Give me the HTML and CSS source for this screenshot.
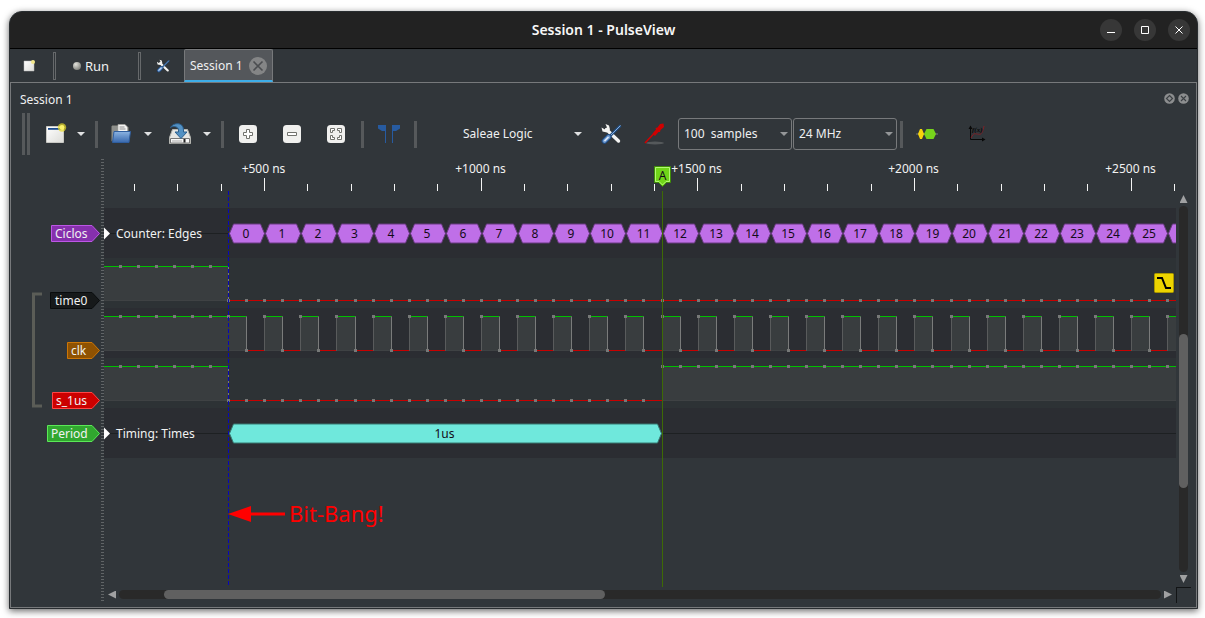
FILE: index.html
```html
<!DOCTYPE html>
<html lang="en">
<head>
<meta charset="utf-8">
<title>Session 1 - PulseView</title>
<link rel="stylesheet" href="styles.css">
</head>
<body>
<svg class="defs" aria-hidden="true">
  <defs>
    <linearGradient id="paper" x1="0" y1="0" x2="1" y2="1"><stop offset="0" stop-color="#fff"/><stop offset="1" stop-color="#dcdcd8"/></linearGradient>
    <linearGradient id="folder" x1="0" y1="0" x2="0" y2="1"><stop offset="0" stop-color="#8cb4e2"/><stop offset="1" stop-color="#3868ad"/></linearGradient>
    <radialGradient id="ball" cx=".35" cy=".3" r=".8"><stop offset="0" stop-color="#e2e2dc"/><stop offset="1" stop-color="#777872"/></radialGradient>
    <symbol id="tools" viewBox="0 0 22 22">
      <path d="M6.500 6.500 18.500 18" stroke="#f4f4f2" stroke-width="3.400" stroke-linecap="round"/>
      <path d="M1.500 4.500 2.500 8.500 7 9.500 10 6.500 9 2.500 5.500 1 7 4.500 5 6.500z" fill="#f4f4f2"/>
      <path d="M20.500 2.500 10 13" stroke="#214f83" stroke-width="2.600"/>
      <path d="M20.500 2.500 10 13" stroke="#89addb" stroke-width="1"/>
      <path d="M8.500 14 4.500 18" stroke="#1f4c84" stroke-width="5.800" stroke-linecap="round"/>
      <path d="M8.500 14 4.500 18" stroke="#709bd0" stroke-width="3.800" stroke-linecap="round"/>
      <path d="M8.500 14 4.500 18" stroke="#e3edf9" stroke-width="1.500"/>
    </symbol>
  </defs>
</svg>

<main class="window">
  <header class="titlebar">
    <h1>Session 1 - PulseView</h1>
    <div class="window-buttons">
      <button aria-label="Minimize"><svg width="22" height="22"><path d="M7 13.500h8"/></svg></button>
      <button aria-label="Maximize"><svg width="22" height="22"><path d="M7.500 7.500h7v7h-7z"/></svg></button>
      <button aria-label="Close"><svg width="22" height="22"><path d="m7.500 7.500 7 7m0-7-7 7"/></svg></button>
    </div>
  </header>

  <nav class="tabs-bar">
    <button class="small-tool" aria-label="New session"><svg width="14" height="14"><path d="M2 2h10v10H2z" fill="url(#paper)" stroke="#bbb" stroke-width=".5"/><circle cx="11" cy="3" r="2" fill="#f2e78a"/></svg></button>
    <span class="groove"></span>
    <button class="run"><svg width="10" height="10" aria-hidden="true"><circle cx="5" cy="5" r="4" fill="url(#ball)"/></svg>Run</button>
    <span class="groove"></span>
    <button class="small-tool settings" aria-label="Settings"><svg width="14" height="14"><use href="#tools"/></svg></button>
    <div class="tab"><button class="tab-name">Session 1</button><button class="tab-close" aria-label="Close Session 1"><svg width="18" height="18"><circle cx="9" cy="9" r="9" fill="#848586"/><path d="m4.500 4.500 9 9m0-9-9 9" stroke="#4b4d50" stroke-width="1.600"/></svg></button></div>
  </nav>

  <section class="panel">
    <div class="panel-head">
      <h2>Session 1</h2>
      <div class="panel-buttons">
        <button aria-label="Float"><svg width="11" height="11"><circle cx="5.500" cy="5.500" r="5.300" fill="#8c8e8f"/><path d="M5.500 2.500 8.500 5.500 5.500 8.500 2.500 5.500z" fill="none" stroke="#3c4044" stroke-width="1.200"/></svg></button>
        <button aria-label="Close dock"><svg width="11" height="11"><circle cx="5.500" cy="5.500" r="5.300" fill="#8c8e8f"/><path d="m3 3 5 5m0-5-5 5" stroke="#3c4044" stroke-width="1.100"/></svg></button>
      </div>
    </div>

    <div class="toolbar">
      <span class="handle"></span>
      <button class="tool after-handle" aria-label="New view"><svg width="22" height="22"><path d="M1.500 3.500h17v16h-17z" fill="url(#paper)" stroke="#c9c9c4"/><path d="M3 5h14v1.800H3z" fill="#1d4c8c"/><circle cx="17" cy="4.500" r="4.200" fill="#e8dc28" opacity=".7"/><circle cx="17" cy="4.500" r="2.400" fill="#fbf36a"/></svg></button>
      <button class="caret" aria-label="New view menu"></button>
      <span class="rule wide"></span>
      <button class="tool spaced" aria-label="Open"><svg width="22" height="22"><path d="M1.500 18V3.500l1-1h6l1 2h9V18z" fill="#8d8f8b" stroke="#60625e"/><path d="M8 9V1.500h7l2.500 2.500V9z" fill="#f4f4f2" stroke="#a5a5a0" stroke-width=".7"/><path d="M9.500 4h5m-5 2h6" stroke="#777" stroke-width=".8"/><path d="m4 8.500h16.500l-1.500 11H2.500z" fill="url(#folder)" stroke="#2f5e9f"/></svg></button>
      <button class="caret" aria-label="Open menu"></button>
      <button class="tool save" aria-label="Save"><svg width="24" height="24"><path d="M4.500 7.500h15l3 8v6h-21v-6z" fill="#e6e6e3" stroke="#b5b6b1"/><path d="M2.500 16.500h19v4.500h-19z" fill="#f8f8f7" stroke="#777"/><path d="M4 19h10" stroke="#aaa"/><path d="M16.500 17v3.500" stroke="#222" stroke-width="2"/><path d="M2.500 5.500C5 .500 15.500-.500 15.500 8v2h3.500l-6 6.500-6-6.500h3.500V8C10.500 4.500 5 3.500 2.500 5.500z" fill="#5391c3" stroke="#2c608e"/></svg></button>
      <button class="caret" aria-label="Save menu"></button>
      <span class="rule wide"></span>
      <button class="tool" aria-label="Zoom in"><svg width="20" height="20"><rect x="1" y="1" width="18" height="18" rx="3.500" fill="#f0f0ee"/><path d="M8.500 5.500h3v3h3v3h-3v3h-3v-3h-3v-3h3z" fill="#fff" stroke="#71726d"/></svg></button>
      <button class="tool" aria-label="Zoom out"><svg width="20" height="20"><rect x="1" y="1" width="18" height="18" rx="3.500" fill="#f0f0ee"/><path d="M5.500 8.500h9v3h-9z" fill="#fff" stroke="#71726d"/></svg></button>
      <button class="tool" aria-label="Zoom to fit"><svg width="20" height="20"><rect x="1" y="1" width="18" height="18" rx="3.500" fill="#f0f0ee"/><path d="M4.500 8.500v-4h4v2h-2v2zm7-4h4v4h-2v-2h-2zm-7 7v4h4v-2h-2v-2zm11 0v4h-4v-2h2v-2z" fill="#fff" stroke="#71726d"/></svg></button>
      <span class="rule"></span>
      <button class="tool flags" aria-label="Show cursors"><svg width="22" height="20"><path d="M0 1h8v18H7V7H4L0 4.500zM22 1h-8v18h1V7h3l4-2.500z" fill="#275ba0"/></svg></button>
      <span class="rule"></span>
      <button class="device"><span>Saleae Logic</span></button>
      <button class="tool" aria-label="Configure device"><svg width="22" height="22"><use href="#tools"/></svg></button>
      <button class="tool" aria-label="Configure channels"><svg width="22" height="22"><ellipse cx="11" cy="20" rx="9" ry="1.500" fill="#55595b"/><path d="M1 20 10 10.500" stroke="#d00000" stroke-width="1.600"/><path d="M8.500 10.500 12 6.500 11.500 5 13.500 4.500 16 1 19.500 .500 20 4 16.500 7 16 9 14.500 9 11 13z" fill="#d00000"/></svg></button>
      <span class="combo samples"><select aria-label="Number of samples"><option>100&nbsp; samples</option></select></span>
      <span class="combo rate"><select aria-label="Sample rate"><option>24 MHz</option></select></span>
      <span class="rule after-combo"></span>
      <button class="tool" aria-label="Add protocol decoder"><svg width="22" height="14"><path d="M0 7h22" stroke="#777b7c"/><path d="m2 7 2-5h2l2 5-2 5H4z" fill="#f7d40b"/><path d="M8 7 10.500 2h7L20 7l-2.500 5h-7z" fill="#76d31b"/></svg></button>
      <button class="tool math" aria-label="Add math signal"><svg width="20" height="20"><path d="M3.500 3v12.500H16" fill="none" stroke="#080808"/><path d="M1.500 5 3.500 1.500 5.500 5zM15 13.500 18.500 15.500 15 17.500z" fill="#080808"/><path d="M4 14c3-6 4-4 6-4s5 3 7-8" fill="none" stroke="#812026"/><text x="5" y="8">f(x)</text></svg></button>
    </div>

    <div class="view">
      <svg class="headers" role="group" aria-label="Channels">
        <g class="bracket"><path d="M31 137h-8.500v112H31"/></g>
        <g class="label ciclos"><path d="M40.500 68.500H81L88.500 76.500 81 84.500H40.500z"/><text x="44" y="81">Ciclos</text></g>
        <g class="label time0"><path d="M39.500 135.500H81L88.500 143.500 81 151.500H39.500z"/><text x="44" y="148">time0</text></g>
        <g class="label clk"><path d="M56.500 185.500H81L88.500 193.500 81 201.500H56.500z"/><text x="60" y="198">clk</text></g>
        <g class="label s1us"><path d="M41.500 235.500H81L88.500 243.500 81 251.500H41.500z"/><text x="45" y="248">s_1us</text></g>
        <g class="label period"><path d="M36.500 268.500H81L88.500 276.500 81 284.500H36.500z"/><text x="40" y="281">Period</text></g>
      </svg>
      <div class="splitter"></div>
      <svg class="plot" id="plot" role="img" aria-label="Logic traces"></svg>
      <div class="vscroll">
        <button class="arrow up" aria-label="Scroll up"></button>
        <div class="track"><div class="thumb"></div></div>
        <button class="arrow down" aria-label="Scroll down"></button>
      </div>
      <div class="hscroll">
        <button class="arrow left" aria-label="Scroll left"></button>
        <div class="track"><div class="thumb"></div></div>
        <button class="arrow right" aria-label="Scroll right"></button>
      </div>
      <div class="corner"></div>
    </div>
  </section>
</main>
<script src="script.js"></script>
</body>
</html>
```
FILE: styles.css
```css
* { box-sizing: border-box; }

body {
  margin: 0;
  min-height: 100vh;
  padding: 11px 7px 9px 9px;
  display: flex;
  background: #fff;
  color: #eff0f1;
  font: 12px/16px "Noto Sans", sans-serif;
}

button, select {
  margin: 0;
  padding: 0;
  border: 0;
  background: none;
  color: inherit;
  font: inherit;
}

button { display: flex; align-items: center; justify-content: center; }
svg { display: block; }
.defs { position: absolute; width: 0; height: 0; }
h1, h2 { margin: 0; font-size: 12px; font-weight: 400; }

.window {
  flex: 1;
  min-width: 0;
  display: flex;
  flex-direction: column;
  border: 1px solid #292d30;
  border-radius: 13px 13px 0 0;
  background: #31363a;
  box-shadow: 0 2px 7px rgba(0, 0, 0, .6);
}

/* Title bar */
.titlebar {
  display: grid;
  grid-template-columns: 1fr auto 1fr;
  align-items: center;
  height: 37px;
  padding: 0 7px;
  border-bottom: 1px solid #000;
  border-radius: 12px 12px 0 0;
  background: #222;
}

.titlebar h1 { grid-column: 2; font-size: 14px; font-weight: 600; color: #f7f7f7; }
.window-buttons { display: flex; gap: 12px; justify-content: flex-end; }
.window-buttons button { border-radius: 50%; background: #373737; }
.window-buttons path { fill: none; stroke: #fff; stroke-width: 1; }

/* Session tabs */
.tabs-bar { display: flex; align-items: center; height: 33px; }
.small-tool { width: 43px; padding-right: 5px; }
.small-tool.settings { padding: 0 0 0 1px; }
.groove { width: 3px; height: 28px; border: 1px solid #66696b; }
.run { width: 82px; gap: 3px; padding-right: 13px; font-size: 13px; }

.tab {
  display: flex;
  align-items: center;
  align-self: stretch;
  gap: 6px;
  padding: 1px 5px 0;
  border: 1px solid #77797b;
  border-bottom: 2px solid #3daee9;
  border-radius: 2px 2px 0 0;
  background: #54575b;
}

/* Session dock */
.panel {
  flex: 1;
  display: flex;
  flex-direction: column;
  border: 1px solid #77797b;
  padding-bottom: 4px;
}

.panel-head {
  display: flex;
  align-items: center;
  justify-content: space-between;
  height: 30px;
  padding: 3px 7px 0 9px;
}

.panel-buttons { display: flex; gap: 3px; padding-bottom: 2px; }

.toolbar { display: flex; align-items: center; height: 44px; padding-bottom: 2px; }

.handle {
  width: 8px;
  height: 42px;
  margin-left: 11px;
  border: solid #56595b;
  border-width: 0 3px;
}

.rule { width: 3px; height: 27px; margin: 0 3px; background: #56595b; }
.rule.wide { margin: 0 2px 0 9px; }
.rule.after-combo { margin-right: 2px; }
.tool { width: 44px; height: 36px; flex: none; }
.tool.after-handle { width: 45px; padding-left: 6px; }
.tool.spaced { width: 42px; }
.tool.save { width: 48px; padding-left: 6px; }
.tool.math { width: 56px; }
.math text { font: italic 700 7px "Liberation Serif", serif; fill: #080808; }

.caret { width: 11px; height: 36px; flex: none; }
.caret::before, .device::after, .combo::after {
  content: "";
  border: solid transparent;
  border-width: 4px 4px 0;
  border-top-color: #e0e1e2;
}

.device { width: 168px; margin-left: 1px; padding: 0 7px 0 42px; justify-content: space-between; }

.combo { display: flex; position: relative; height: 32px; margin-left: 1px; }
.combo::after { position: absolute; right: 4px; top: 14px; border-top-color: #949698; }
.combo select {
  width: 100%;
  padding: 0 5px;
  border: 1px solid #77797b;
  border-radius: 3px;
  appearance: none;
}
.samples { width: 114px; }
.rate { width: 104px; }

/* Trace view */
.view {
  flex: 1;
  display: grid;
  grid-template: minmax(430px, 1fr) 16px / 90px 3px minmax(0, 1fr) 20px;
}

.headers { width: 100%; height: 100%; grid-row: span 2; overflow: visible; }
.splitter {
  grid-row: span 2;
  margin-top: 2px;
  background: repeating-linear-gradient(#606466 0 1px, transparent 1px 3px);
}
.plot { width: 100%; height: 100%; }

.bracket path { fill: none; stroke: #5b5d57; stroke-width: 3; }
.label path { stroke-width: 1; }
.label text, .plot text { fill: #f1f2f2; }
.ciclos path { fill: #8630ad; stroke: #bd57e6; }
.time0 path { fill: #16191a; stroke: #090c0d; }
.clk path { fill: #8f5202; stroke: #cc7607; }
.s1us path { fill: #cc0000; stroke: #ff4545; }
.period path { fill: #31a72f; stroke: #5be957; }

.plot .band { fill: #2b2d32; }
.plot .band.alt { fill: #2d3235; }
.plot .tick { stroke: #f4f4f4; }
.plot .axis { stroke: #1d2022; }
.plot .area { fill: #393d3f; }
.plot .base { stroke: #46494b; }
.plot .edge { stroke: #7a7b7b; }
.plot .high { stroke: #00c000; }
.plot .low { stroke: #c80000; }
.plot .sample { fill: #777978; }
.plot .count { fill: #bf6fe8; stroke: #693b80; }
.plot .time { fill: #6fe8dc; stroke: #397871; }
.plot text.dark { fill: #140b18; }
.plot .middle { text-anchor: middle; }
.plot .cursor { stroke: #0808b8; stroke-dasharray: 4 2; }
.plot .marker { stroke: #3d6a05; }
.plot .flag { fill: #70d518; stroke: #3e8c07; }
.plot .flag-edge { fill: none; stroke: #b3f875; }
.plot .trigger { fill: #edd400; stroke: #aa9800; }
.plot .trigger-edge { fill: none; stroke: #000; stroke-width: 2; }
.plot .arrowhead { fill: #f00; }
.plot .shaft { stroke: #f00; stroke-width: 3; }
.plot .note { font-size: 22px; fill: #f00; }
.plot .expand { fill: #fff; }

/* Scroll bars */
.vscroll { display: flex; flex-direction: column; padding: 38px 8px 4px 3px; gap: 3px; align-items: center; }
.hscroll { display: flex; padding: 3px 4px 4px; gap: 3px; align-items: center; grid-column: 3; }
.track { flex: 1; display: flex; border-radius: 5px; background: #292929; }
.thumb { border-radius: 5px; background: #606060; }
.vscroll .track { width: 9px; flex-direction: column; }
.hscroll .track { height: 9px; }
.vscroll .thumb { height: 42%; margin-top: 128px; }
.hscroll .thumb { width: 42.3%; margin-left: 45px; }
.arrow { width: 8px; height: 8px; background: #a0a1a2; }
.up { clip-path: polygon(50% 0, 100% 100%, 0 100%); }
.down { clip-path: polygon(0 0, 100% 0, 50% 100%); }
.left { clip-path: polygon(0 50%, 100% 0, 100% 100%); }
.right { clip-path: polygon(0 0, 100% 50%, 0 100%); }
.corner { width: 15px; border: solid #121415; border-width: 1px 0 0 1px; }
```
FILE: script.js
```javascript
const plot = document.getElementById('plot');

function add(name, attrs, text, parent = plot) {
  const node = document.createElementNS('http://www.w3.org/2000/svg', name);
  for (const key in attrs) node.setAttribute(key, attrs[key]);
  if (text !== undefined) node.textContent = text;
  parent.appendChild(node);
  return node;
}

const line = (cls, x1, y1, x2, y2) => add('line', { class: cls, x1, y1, x2, y2 });
const snap = x => Math.floor(x) + 0.5;

// One sample of the 24 MHz capture; sample 0 is where the blue cursor sits.
const STEP = 18.06;
const ORIGIN = 124.6;
const LAST = 54;
const sampleX = k => snap(ORIGIN + k * STEP);

// Row backgrounds
for (let row = 0; row < 5; row++) {
  add('rect', { class: row % 2 ? 'band alt' : 'band', x: 0, y: 51 + row * 50, width: '100%', height: 50 });
}

// Time ruler: a tick each 100 ns, labelled each 500 ns
for (let i = -3; i < 22; i++) {
  const x = snap(160.4 + i * 43.34);
  const major = i % 5 === 0;
  line('tick', x, major ? 21 : 27, x, 34);
  if (major) add('text', { class: 'middle', x: x - 1, y: 16 }, `+${500 + i * 100} ns`);
}

// Logic traces
function trace(high, low, level) {
  line('base', 0, low, '100%', low);
  let start = -7;
  for (let k = -6; k <= LAST; k++) {
    if (k < LAST && level(k) === level(k - 1)) continue;
    const x1 = start === -7 ? 0 : sampleX(start);
    const x2 = sampleX(k);
    const up = level(start);
    if (up) add('rect', { class: 'area', x: x1, y: high, width: x2 - x1, height: low - high });
    line(up ? 'high' : 'low', x1, up ? high : low, x2, up ? high : low);
    line('edge', x2, high, x2, low);
    start = k;
  }
  for (let k = -6; k < LAST; k++) {
    add('rect', { class: 'sample', x: sampleX(k) - 1.5, y: (level(k) ? high : low) - 1.5, width: 3, height: 3 });
  }
}
trace(109.5, 143.5, k => k < 0);
trace(159.5, 193.5, k => k < 1 || k % 2 === 0);
trace(209.5, 243.5, k => k < 0 || k >= 24);

// Decoder rows
function box(cls, x1, x2, y, label) {
  add('path', { class: cls, d: `M${x1} ${y}l4-9.500H${x2 - 4}l4 9.500-4 9.500H${x1 + 4}z` });
  if (label !== undefined) add('text', { class: 'dark middle', x: (x1 + x2) / 2 - 1, y: y + 4.5 }, label);
}
function decoder(y, title) {
  line('axis', 0, y, '100%', y);
  add('path', { class: 'expand', d: `M0 ${y - 6}l6 6-6 6z` });
  add('text', { x: 12, y: y + 4.5 }, title);
}
decoder(76.5, 'Counter: Edges');
for (let i = 0; i < 27; i++) {
  box('count', snap(ORIGIN + i * 2 * STEP) + 1, snap(ORIGIN + (i + 1) * 2 * STEP), 76.5, i < 26 ? i : undefined);
}
decoder(276.5, 'Timing: Times');
box('time', 125.5, 557.5, 276.5, '1us');

// Cursors
line('cursor', 124.5, 34, 124.5, '100%');
line('marker', 558.5, 34, 558.5, '100%');
add('path', { class: 'flag', d: 'M550.5 9.500h16v16h-4l-4 4-4-4h-4z' });
add('path', { class: 'flag-edge', d: 'M551.5 10.500h14v14h-3.500l-3.500 3.500-3.500-3.500h-3.500z' });
add('text', { class: 'dark middle', x: 558.5, y: 23 }, 'A');

// Trigger badge keeps to the right edge
const badge = add('svg', { x: '100%', y: 116, overflow: 'visible' });
add('rect', { class: 'trigger', x: -21.5, y: 0.5, width: 19, height: 19, rx: 1 }, undefined, badge);
add('path', { class: 'trigger-edge', d: 'M-19 5h5l4 10h5' }, undefined, badge);

// Annotation
add('path', { class: 'arrowhead', d: 'M124 357l23-8v16z' });
line('shaft', 146, 357, 181, 357);
add('text', { class: 'note', x: 185, y: 365 }, 'Bit-Bang!');
```
